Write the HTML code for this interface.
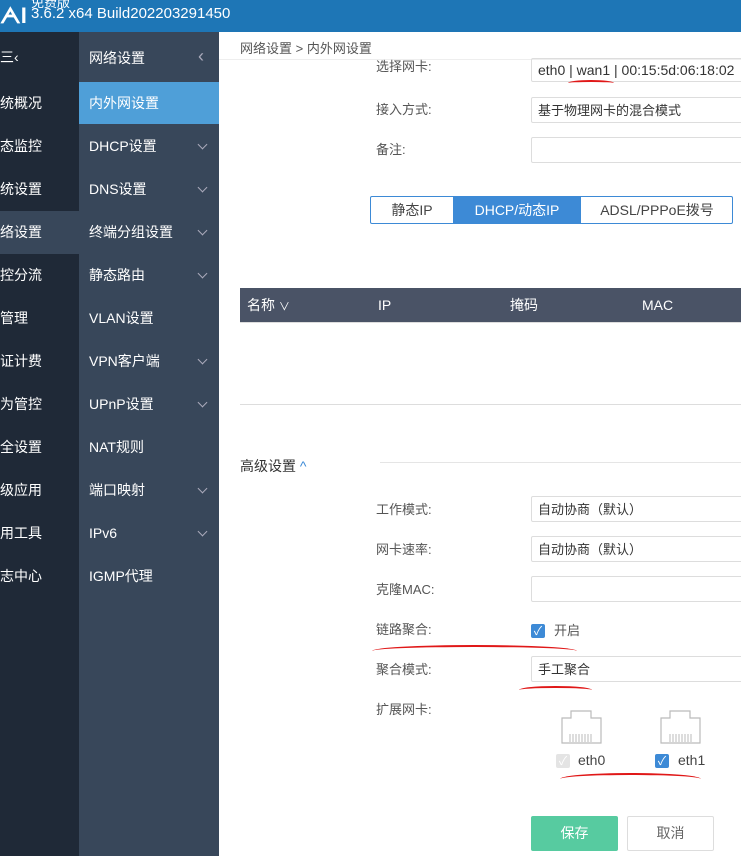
<!DOCTYPE html><html><head><meta charset="utf-8"><style>
*{margin:0;padding:0;box-sizing:border-box}
body{width:741px;height:856px;overflow:hidden;position:relative;background:#fff;font-family:"Liberation Sans","Noto Sans CJK SC",sans-serif;font-size:14px;color:#444}
.a{position:absolute;white-space:nowrap}
.hd{left:0;top:0;width:741px;height:32px;background:#1e76b6;color:#fff}
.c1{left:0;top:32px;width:79px;height:824px;background:#1f2937}
.c2{left:79px;top:32px;width:140px;height:824px;background:#38475a}
.m{color:#fff;font-size:14px;line-height:20px}
.chev{position:absolute;left:199px;width:7px;height:7px;border-right:1px solid #aab;border-bottom:1px solid #aab;transform:rotate(45deg)}
.lbl{color:#555;font-size:13px;line-height:18px}
.inp{position:absolute;left:531px;width:220px;height:26px;border:1px solid #ddd;border-radius:2px;font-size:13px;color:#333;padding:4px 6px;line-height:16px}
.red{position:absolute;border-top:2px solid #e01818;border-radius:50%}
.cb{position:absolute;width:14px;height:14px;border-radius:2px;background:#3d8ad6;color:#fff;font-size:12px;line-height:14px;text-align:center}
.th{position:absolute;top:0;line-height:34px}
</style></head><body>
<div class="a hd"><div class="a" style="left:0;top:6px;font-size:22px;font-weight:bold;line-height:20px">ᗅI</div><div class="a" style="left:31px;top:-8px;font-size:13px">免费版</div><div class="a" style="left:31px;top:5px;font-size:15px">3.6.2 x64 Build202203291450</div></div>
<div class="a c1"></div>
<div class="a" style="left:0;top:211px;width:79px;height:43px;background:#38475a"></div>
<div class="a c2"></div>
<div class="a" style="left:79px;top:82px;width:140px;height:42px;background:#4f9fd8"></div>
<div class="a m" style="left:0;top:47px">三‹</div>
<div class="a m" style="left:0;top:93px">统概况</div>
<div class="a m" style="left:0;top:136px">态监控</div>
<div class="a m" style="left:0;top:179px">统设置</div>
<div class="a m" style="left:0;top:222px">络设置</div>
<div class="a m" style="left:0;top:265px">控分流</div>
<div class="a m" style="left:0;top:308px">管理</div>
<div class="a m" style="left:0;top:351px">证计费</div>
<div class="a m" style="left:0;top:394px">为管控</div>
<div class="a m" style="left:0;top:437px">全设置</div>
<div class="a m" style="left:0;top:480px">级应用</div>
<div class="a m" style="left:0;top:523px">用工具</div>
<div class="a m" style="left:0;top:566px">志中心</div>
<div class="a m" style="left:89px;top:48px">网络设置</div><div class="a" style="left:198px;top:46px;color:#aab;font-size:18px">‹</div>
<div class="a m" style="left:89px;top:93px">内外网设置</div>
<div class="a m" style="left:89px;top:136px">DHCP设置</div><div class="chev" style="top:141px"></div>
<div class="a m" style="left:89px;top:179px">DNS设置</div><div class="chev" style="top:184px"></div>
<div class="a m" style="left:89px;top:222px">终端分组设置</div><div class="chev" style="top:227px"></div>
<div class="a m" style="left:89px;top:265px">静态路由</div><div class="chev" style="top:270px"></div>
<div class="a m" style="left:89px;top:308px">VLAN设置</div>
<div class="a m" style="left:89px;top:351px">VPN客户端</div><div class="chev" style="top:356px"></div>
<div class="a m" style="left:89px;top:394px">UPnP设置</div><div class="chev" style="top:399px"></div>
<div class="a m" style="left:89px;top:437px">NAT规则</div>
<div class="a m" style="left:89px;top:480px">端口映射</div><div class="chev" style="top:485px"></div>
<div class="a m" style="left:89px;top:523px">IPv6</div><div class="chev" style="top:528px"></div>
<div class="a m" style="left:89px;top:566px">IGMP代理</div>
<div class="a" style="left:240px;top:38px;font-size:13px;color:#555">网络设置 &gt; 内外网设置</div>
<div class="a" style="left:219px;top:59px;width:522px;height:1px;background:#eee"></div>
<div class="a lbl" style="left:376px;top:58px">选择网卡:</div>
<div class="inp" style="top:58px;height:24px;padding-top:3px;font-size:14px">eth0 | wan1 | 00:15:5d:06:18:02</div>
<div class="a lbl" style="left:376px;top:101px">接入方式:</div>
<div class="inp" style="top:97px;padding-top:5px">基于物理网卡的混合模式</div>
<div class="a lbl" style="left:376px;top:141px">备注:</div>
<div class="inp" style="top:137px"></div>
<div class="a" style="left:370px;top:196px;width:363px;height:28px;border:1px solid #3d8ad6;border-radius:2px;font-size:14px">
<div class="a" style="left:0;top:0;width:82px;height:26px;line-height:26px;text-align:center;color:#444">静态IP</div>
<div class="a" style="left:82px;top:0;width:128px;height:26px;line-height:26px;text-align:center;background:#3d8ad6;color:#fff">DHCP/动态IP</div>
<div class="a" style="left:210px;top:0;width:152px;height:26px;line-height:26px;text-align:center;color:#444">ADSL/PPPoE拨号</div></div>
<div class="a" style="left:240px;top:288px;width:501px;height:34px;background:#4a5366;color:#fff;font-size:14px">
<div class="th" style="left:7px">名称 <span style="font-size:11px">∨</span></div><div class="th" style="left:138px">IP</div><div class="th" style="left:270px">掩码</div><div class="th" style="left:402px">MAC</div></div>
<div class="a" style="left:240px;top:322px;width:501px;height:1px;background:#ddd"></div>
<div class="a" style="left:240px;top:404px;width:501px;height:1px;background:#ddd"></div>
<div class="a" style="left:240px;top:456px;font-size:14px;color:#333;line-height:20px">高级设置 <span style="color:#3d8ad6">^</span></div>
<div class="a" style="left:380px;top:462px;width:361px;height:1px;background:#e5e5e5"></div>
<div class="a lbl" style="left:376px;top:501px">工作模式:</div><div class="inp" style="top:496px;padding-top:5px">自动协商（默认）</div>
<div class="a lbl" style="left:376px;top:541px">网卡速率:</div><div class="inp" style="top:536px;padding-top:5px">自动协商（默认）</div>
<div class="a lbl" style="left:376px;top:581px">克隆MAC:</div><div class="inp" style="top:576px"></div>
<div class="a lbl" style="left:376px;top:621px">链路聚合:</div>
<div class="cb" style="left:531px;top:624px">✓</div><div class="a lbl" style="left:554px;top:622px">开启</div>
<div class="a lbl" style="left:376px;top:661px">聚合模式:</div><div class="inp" style="top:656px;padding-top:5px">手工聚合</div>
<div class="a lbl" style="left:376px;top:701px">扩展网卡:</div>
<svg class="a" style="left:560px;top:710px" width="150" height="36" viewBox="0 0 150 36"><g fill="none" stroke="#bbb" stroke-width="1.2"><path d="M11 1h20v7h10v25H2V8h9z"/><path d="M110 1h20v7h10v25h-39V8h9z"/></g><g stroke="#bbb" stroke-width="1"><path d="M10 24v8M13 24v8M16 24v8M19 24v8M22 24v8M25 24v8M28 24v8M31 24v8M110 24v8M113 24v8M116 24v8M119 24v8M122 24v8M125 24v8M128 24v8M131 24v8"/></g></svg>
<div class="cb" style="left:556px;top:754px;background:#e4e4e4">✓</div><div class="a" style="left:578px;top:752px;font-size:14px;color:#444">eth0</div>
<div class="cb" style="left:655px;top:754px">✓</div><div class="a" style="left:678px;top:752px;font-size:14px;color:#444">eth1</div>
<div class="a" style="left:531px;top:816px;width:87px;height:35px;background:#57cba0;border-radius:2px;color:#fff;text-align:center;line-height:35px">保存</div>
<div class="a" style="left:627px;top:816px;width:87px;height:35px;border:1px solid #ddd;border-radius:2px;color:#666;text-align:center;line-height:33px">取消</div>
<div class="red" style="left:568px;top:80px;width:46px;height:6px"></div>
<div class="red" style="left:372px;top:645px;width:205px;height:12px"></div>
<div class="red" style="left:519px;top:686px;width:73px;height:8px"></div>
<div class="red" style="left:560px;top:773px;width:141px;height:12px"></div>
</body></html>
